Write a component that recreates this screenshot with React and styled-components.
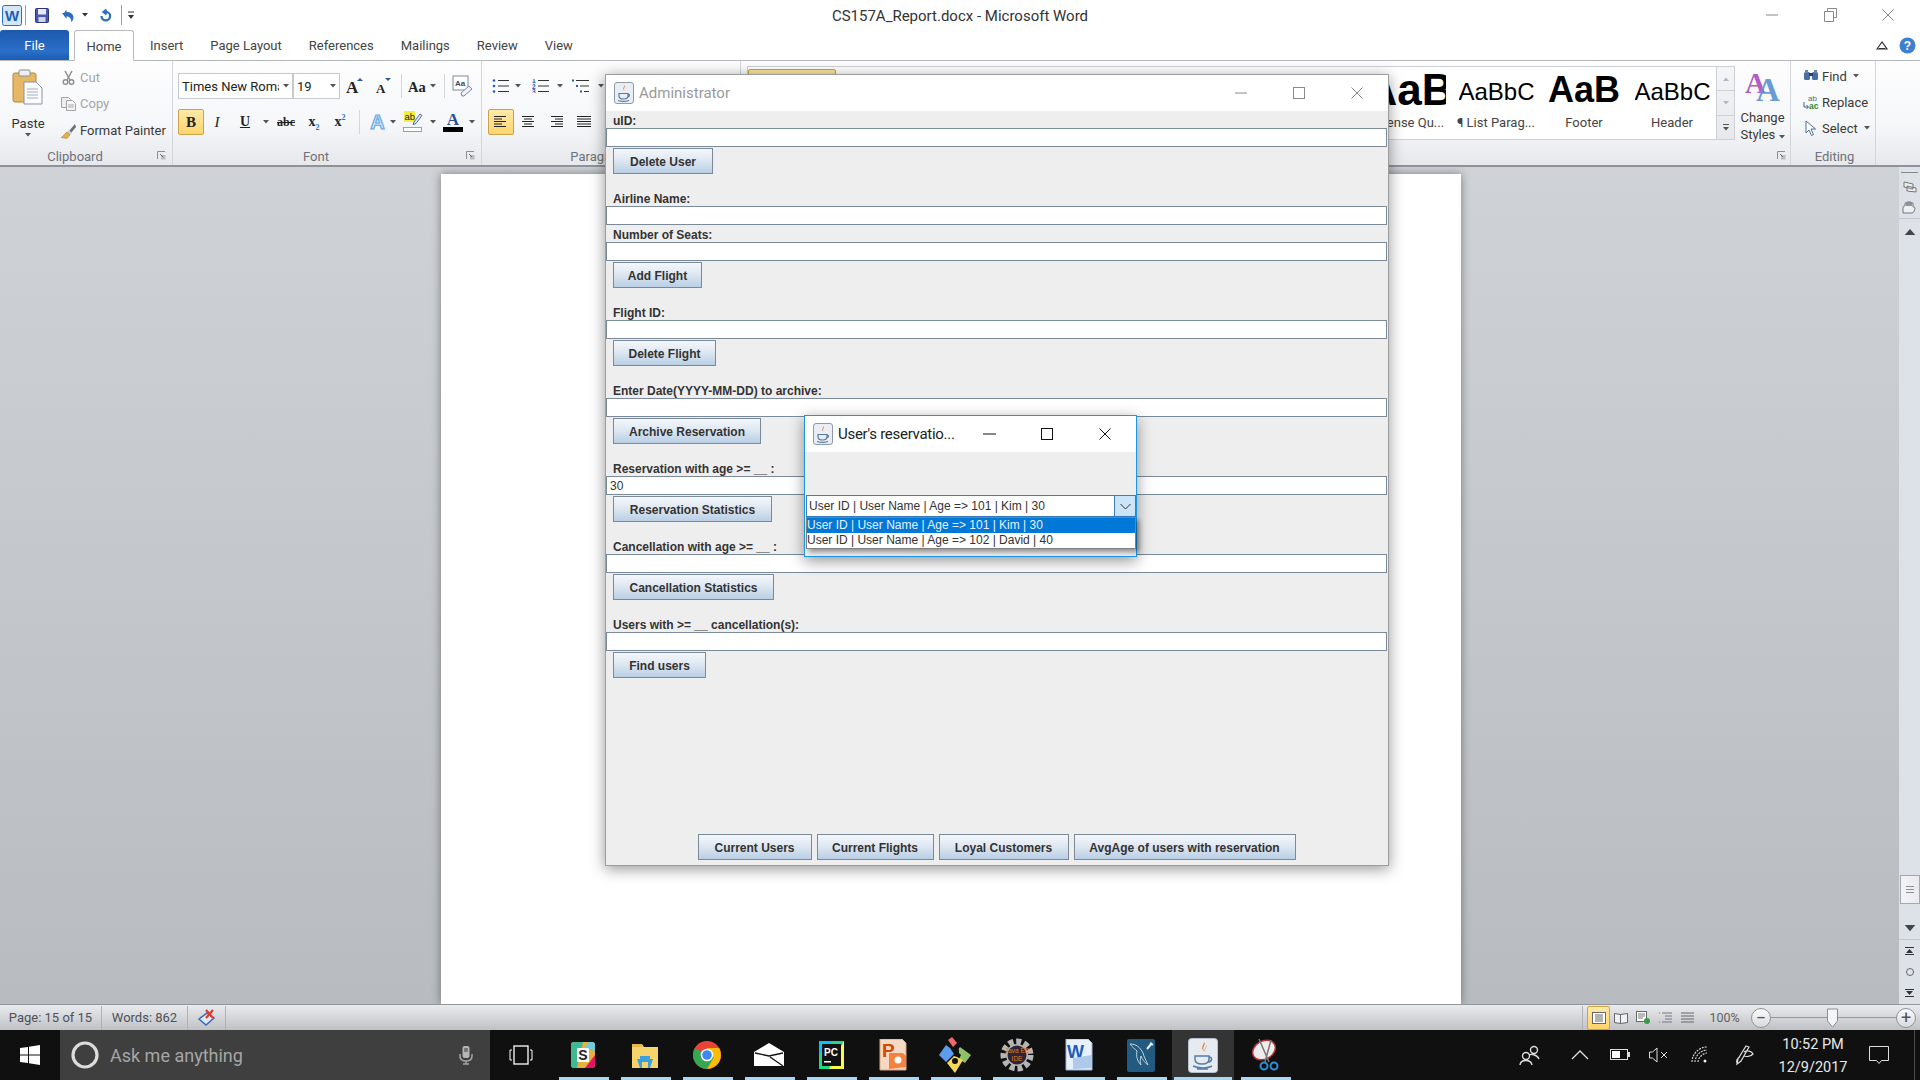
import React from "react";
import styled, { createGlobalStyle } from "styled-components";

const Global = createGlobalStyle`
  html, body { margin: 0; padding: 0; width: 1920px; height: 1080px; overflow: hidden; background: #fff; }
  * { box-sizing: border-box; }
  #root { width: 1920px; height: 1080px; }
`;

const UI = `Roboto, "Liberation Sans", sans-serif`;
const JAVA = `"Liberation Sans", Arial, sans-serif`;

const Screen = styled.div`
  position: relative; width: 1920px; height: 1080px; display: flex; flex-direction: column;
  overflow: hidden; font-family: ${UI}; font-size: 13px; color: #3c3c3c; background: #fff;
`;

/* title bar */
const TitleRow = styled.div`
  height: 30px; display: grid; grid-template-columns: 1fr auto 1fr; align-items: center; background: #fff;
`;
const Qat = styled.div`display: flex; align-items: center; padding-left: 2px;`;
const QatSlot = styled.div`
  width: ${p => p.$w}px; height: 30px; display: flex; align-items: center; justify-content: center;
`;
const QatSep = styled.div`width: 1px; height: 20px; background: #9c9c9c; margin: 0 ${p => p.$m || 0}px;`;
const DocTitle = styled.div`font-size: 15px; color: #333; white-space: nowrap; padding-top: 2px;`;
const WinCtrls = styled.div`display: flex; justify-content: flex-end; padding-right: 3px;`;
const WinCtrl = styled.div`
  width: ${p => p.$w || 58}px; height: ${p => p.$h || 30}px; display: flex; align-items: center; justify-content: center;
`;

/* tabs */
const TabRow = styled.div`
  height: 31px; display: flex; align-items: flex-end; background: #fff; border-bottom: 1px solid #b6babf;
`;
const FileTab = styled.div`
  width: 69px; height: 30px; margin-right: 5px; color: #fff; display: flex; align-items: center; justify-content: center;
  background: linear-gradient(#1d58ad, #2a6fc9 70%, #1c5cb3); border-radius: 3px 3px 0 0; font-size: 13px; padding-top: 1px;
`;
const Tab = styled.div`
  height: ${p => (p.$on ? 31 : 30)}px; padding: 1px 13.5px 0; display: flex; align-items: center; color: #444;
  margin-bottom: ${p => (p.$on ? -1 : 0)}px; margin-left: ${p => p.$gap || 0}px; white-space: nowrap;
  ${p => p.$on && `background:#fff;border:1px solid #b6babf;border-bottom:1px solid #fff;border-radius:3px 3px 0 0;padding:1px 13px 0;width:60px;justify-content:center;`}
`;
const HelpBox = styled.div`
  margin-left: auto; display: flex; align-items: center; gap: 10px; height: 30px; padding-right: 4px;
`;

/* ribbon */
const Ribbon = styled.div`
  height: 106px; display: flex; background: linear-gradient(#fdfdfe, #f6f7f9 60%, #e6e8ec); border-bottom: 2px solid #8f9298;
`;
const Group = styled.div`
  width: ${p => p.$w}px; flex: none; display: flex; flex-direction: column; border-right: 1px solid #d3d6db;
`;
const GroupBody = styled.div`height: 85px; display: flex; padding-left: ${p => p.$pl || 0}px;`;
const GroupFoot = styled.div`
  height: 19px; display: flex; align-items: center; color: #6d7178; padding-left: ${p => p.$pl || 0}px;
`;
const GroupName = styled.div`flex: 1; text-align: center; font-size: 13px; line-height: 19px; padding-top: 2px;`;
const Launcher = styled.div`width: ${p => p.$w || 22}px; height: 19px; display: flex; align-items: center; justify-content: center;`;

const PasteCol = styled.div`
  width: 56px; flex: none; display: flex; flex-direction: column; align-items: center; padding-top: 8px;
`;
const PasteLabel = styled.div`margin-top: 10px; line-height: 18px; color: #333;`;
const SmallCol = styled.div`display: flex; flex-direction: column; padding-top: ${p => p.$pt ?? 3}px;`;
const SmallRow = styled.div`
  height: ${p => p.$h || 26}px; display: flex; align-items: center; white-space: nowrap; color: ${p => (p.$off ? "#a3a5a8" : "#3a3a3a")};
`;
const SmallIcon = styled.div`width: ${p => p.$w || 24}px; flex: none; display: flex; justify-content: center;`;

const Rows = styled.div`display: flex; flex-direction: column; gap: 10px; padding-top: 12px;`;
const Row = styled.div`height: 26px; display: flex; align-items: center;`;
const Combo = styled.div`
  width: ${p => p.$w}px; height: 26px; background: #fff; border: 1px solid #c6c9ce; display: flex; align-items: center;
  padding: 0 3px; color: #222; font-size: 13px; justify-content: space-between; overflow: hidden; white-space: nowrap;
`;
const ComboText = styled.span`width: ${p => p.$w}px; overflow: hidden; display: block;`;
const Slot = styled.div`
  width: ${p => p.$w}px; height: 26px; flex: none; display: flex; align-items: center; justify-content: center; color: #222;
  ${p => p.$on && `background:linear-gradient(#fee9a8,#fdd56f);border:1px solid #c9a24c;border-radius:2px;`}
`;
const VLine = styled.div`width: ${p => p.$w}px; height: 24px; flex: none; display: flex; justify-content: center; &::after{content:"";width:1px;background:#d5d7da;}`;
const SerifGlyph = styled.span`
  font-family: "Liberation Serif", serif; font-weight: ${p => (p.$b ? 700 : 400)}; font-style: ${p => (p.$i ? "italic" : "normal")};
  font-size: ${p => p.$s || 14}px; text-decoration: ${p => (p.$u ? "underline" : p.$strike ? "line-through" : "none")}; color: #222;
`;
const Sub = styled.sub`font-size: 8px; color: #2b6fc9; line-height: 0;`;
const Sup = styled.sup`font-size: 8px; color: #2b6fc9; line-height: 0;`;

const Gallery = styled.div`
  margin: 5px 0 0 6px; width: 988px; height: 74px; display: flex; background: #fff; border: 1px solid #cdd0d4; border-right: 0;
`;
const GalleryActive = styled.div`
  width: 88px; flex: none; margin: 2px 0 0 0; background: linear-gradient(#fce59b,#f9d36a); border: 1px solid #c8a245;border-radius:2px;
`;
const GalleryGap = styled.div`flex: 1;`;
const Cell = styled.div`width: 88px; flex: none; display: flex; flex-direction: column; align-items: center;`;
const Preview = styled.div`
  height: 46px; width: 75px; overflow: hidden; display: flex; align-items: center; color: #000; white-space: nowrap; line-height: 1;
  font-family: "Liberation Sans", Arial, sans-serif; font-size: ${p => p.$s}px; font-weight: ${p => (p.$b ? 700 : 400)};
  justify-content: ${p => (p.$c ? "center" : "flex-start")}; padding-top: ${p => p.$pt || 0}px; text-indent: ${p => p.$shift || 0}px;
`;
const CellName = styled.div`font-size: 13px; color: #444; white-space: nowrap; line-height: 18px; padding-top: 1px;`;
const GalScroll = styled.div`width: 19px; flex: none; display: flex; flex-direction: column; background: linear-gradient(#f4f5f7,#e6e8eb);border:1px solid #cdd0d4;margin:-1px 0;`;
const GalBtn = styled.div`flex: 1; display: flex; align-items: center; justify-content: center; border-top: ${p => (p.$t ? "1px solid #cdd0d4" : "0")};`;
const ChangeCol = styled.div`
  width: 55px; flex: none; display: flex; flex-direction: column; align-items: center; padding-top: 8px; line-height: 17px; color: #3a3a3a;
`;
const ChangeText = styled.div`white-space: nowrap; margin-top: ${p => p.$mt || 0}px;`;

/* workspace */
const Workspace = styled.div`flex: 1; display: flex; min-height: 0;`;
const DocArea = styled.div`
  flex: 1; display: flex; justify-content: center; padding: 7px 0 0 3px; overflow: hidden; background: linear-gradient(#cfd2d6,#b8bbbf);
`;
const Page = styled.div`width: 1020px; background: #fff; box-shadow: 0 0 9px rgba(0,0,0,.4);`;
const VScroll = styled.div`width: 21px; flex: none; display: flex; flex-direction: column; background: #dde1e8; color: #555;`;
const VTop = styled.div`height: 52px; display: flex; flex-direction: column; align-items: center; justify-content: space-between; padding: 5px 0 4px; border-bottom: 1px solid #c4c8ce;`;
const VDash = styled.div`width: 17px; height: 1px; background: #888;`;
const VArrow = styled.div`height: ${p => p.$h || 24}px; flex: none; display: flex; align-items: center; justify-content: center;`;
const VTrack = styled.div`flex: 1; padding-top: 632px;`;
const VThumb = styled.div`
  height: 29px; margin: 0 0 0 1px; width: 20px; background: linear-gradient(90deg,#f3f4f7,#e9ebef); border: 1px solid #a5a8ad;
  display: flex; flex-direction: column; align-items: center; justify-content: center; gap: 2px;
`;
const Grip = styled.div`width: 8px; height: 1px; background: #8c8f94;`;
const VBrowse = styled.div`height: 65px; flex: none; display: flex; flex-direction: column; border-top: 1px solid #c4c8ce;`;
const VBrowseItem = styled.div`flex: 1; display: flex; align-items: center; justify-content: center;`;

/* status bar */
const StatusBar = styled.div`
  height: 26px; flex: none; display: flex; align-items: center; color: #4d5158; font-size: 13px;
  background: linear-gradient(#e9ebee,#bfc1c6); border-top: 1px solid #93969b;
`;
const StatusItem = styled.div`
  width: ${p => p.$w}px; height: 24px; display: flex; align-items: center; justify-content: center; border-right: 1px solid #aeb1b6; white-space: nowrap;
`;
const StatusRight = styled.div`margin-left: auto; display: flex; align-items: center; padding-right: 4px;`;
const ViewGroup = styled.div`display: flex; align-items: center; border-left: 1px solid #aeb1b6; padding-left: 4px;`;
const ViewBtn = styled.div`
  width: ${p => p.$w || 22}px; height: 24px; display: flex; align-items: center; justify-content: center;
  ${p => p.$on && `background:linear-gradient(#fee9a8,#fdd36b);border:1px solid #c9a24c;border-radius:2px;`}
`;
const Zoom = styled.div`width: 53px; text-align: center; font-size: 12.5px; color: #66615a;`;
const ZoomBtn = styled.div`
  width: 20px; height: 20px; border-radius: 50%; border: 1px solid #8f9298; background: linear-gradient(#fafbfc,#d8dadd);
  display: flex; align-items: center; justify-content: center; flex: none; font-size: 18px; line-height: 16px; color: #555;
`;
const ZoomTrack = styled.div`width: 125px; height: 24px; display: flex; align-items: center; position: relative; &::before{content:"";flex:1;height:1px;background:#94979c;}`;
const ZoomThumb = styled.div`position: absolute; left: 56px; top: 2px;`;

/* taskbar */
const Taskbar = styled.div`height: 50px; flex: none; display: flex; align-items: center; background: #101010; color: #e6e6e6;`;
const StartBtn = styled.div`width: 60px; height: 50px; display: flex; align-items: center; justify-content: center;`;
const Search = styled.div`
  width: 430px; height: 50px; background: #3f3f3f; display: flex; align-items: center; padding: 0 17px 0 10px;
`;
const SearchText = styled.div`flex: 1; margin-left: 10px; font-size: 18px; color: #a6a6a6;`;
const TaskView = styled.div`width: 62px; height: 50px; display: flex; align-items: center; justify-content: center;`;
const TaskBtn = styled.div`
  position: relative; width: 62px; height: 50px; display: flex; align-items: center; justify-content: center;
  background: ${p => (p.$active ? "#343434" : "transparent")};
  &::after { content: ""; position: absolute; bottom: 0; height: 3px; left: ${p => (p.$active ? 2 : 7)}px; right: ${p => (p.$active ? 2 : 5)}px; background: #a6d8f5; }
`;
const Tray = styled.div`margin-left: auto; display: flex; align-items: center; height: 50px; padding-right: 5px;`;
const TrayIcon = styled.div`width: ${p => p.$w}px; flex: none; display: flex; justify-content: center; align-items: center;`;
const Clock = styled.div`width: 70px; flex: none; display: flex; flex-direction: column; align-items: center; font-size: 14.5px; line-height: 23px; color: #e8e8e8; padding-top: 2px; white-space: nowrap;`;
const ShowDesktop = styled.div`width: 1px; height: 50px; margin-left: 4px; background: #4a4a4a;`;

/* java windows */
const AdminWindow = styled.div`
  position: absolute; left: 605px; top: 74px; width: 784px; height: 792px; display: flex; flex-direction: column;
  background: #eeeeee; border: 1px solid #9d9d9d; box-shadow: 0 3px 14px rgba(0,0,0,.42); font-family: ${JAVA};
`;
const FrameTitle = styled.div`
  height: ${p => p.$h}px; flex: none; background: #fff; display: flex; align-items: center; padding-left: 8px;
  font-family: ${UI}; font-size: 15px; color: ${p => (p.$dim ? "#9a9a9a" : "#222")}; white-space: nowrap;
`;
const FrameName = styled.div`margin-left: 5px; width: ${p => p.$w}px; letter-spacing: ${p => (p.$tight ? "-.28px" : "0")};`;
const FrameBtns = styled.div`margin-left: auto; display: flex; padding-right: 2px;`;
const FrameBtn = styled.div`width: ${p => p.$w}px; height: 36px; display: flex; align-items: center; justify-content: center;`;
const Form = styled.div`flex: 1; display: flex; flex-direction: column;`;
const FormBlock = styled.div`display: flex; flex-direction: column; margin-bottom: 15px;`;
const FieldLabel = styled.div`height: 17px; line-height: 20px; padding-left: 7px; font-size: 12px; font-weight: 700; color: #333; white-space: nowrap;`;
const Field = styled.div`
  height: 19px; margin: 0 1px 0 0; background: #fff; border: 1px solid #7a8a99; font-size: 12px; line-height: 18px; padding-left: 3px; color: #333;
`;
const JButton = styled.div`
  height: 26px; margin-top: ${p => (p.$top ? 1 : 0)}px; margin-left: ${p => (p.$top ? 7 : 0)}px; width: ${p => p.$w}px; flex: none; padding-top: 1px;
  border: 1px solid #7a8a99; background: linear-gradient(#f4f7fb,#dfe8f2 45%,#b9cfe5);
  display: flex; align-items: center; justify-content: center; font-size: 12px; font-weight: 700; color: #333; white-space: nowrap;
`;
const FootBar = styled.div`margin-top: auto; display: flex; justify-content: center; gap: 5px; padding: 0 0 5px 0; margin-left:-1px;`;

const PopupWindow = styled.div`
  position: absolute; left: 804px; top: 415px; width: 333px; height: 142px; background: #eeeeee; border: 1px solid #1a98e2;
  box-shadow: 0 4px 14px rgba(0,0,0,.42); font-family: ${JAVA}; display: flex; flex-direction: column;
`;
const PopupBody = styled.div`flex: 1; position: relative; padding-top: 43px;`;
const PopCombo = styled.div`
  height: 22px; margin: 0 0 0 1px; background: #fff; border: 1px solid #3b7fc0; display: flex; align-items: center; font-size: 12px; color: #333;
`;
const PopComboText = styled.div`flex: 1; padding-left: 2px; white-space: nowrap;`;
const PopArrow = styled.div`width: 21px; height: 20px; background: #cce4f7; border-left: 1px solid #3b7fc0; display: flex; align-items: center; justify-content: center;`;
const PopList = styled.div`
  position: absolute; left: 0; right: 0; top: 65px; margin: 0 0 0 1px; background: #fff; border: 1px solid #7f7f7f; box-shadow: 3px 3px 5px rgba(0,0,0,.4);
  font-size: 12px; line-height: 15px; color: #333;
`;
const PopItem = styled.div`height: 15px; white-space: nowrap; ${p => p.$sel && `background:#0078d7;color:#e8f1fb;`}`;

/* icons */
const Tri = ({ dir = "d", c = "#555", s = 3 }) => (
  <svg width={s * 2} height={s + 1} viewBox="0 0 6 4">
    <path d={dir === "d" ? "M0 0h6L3 3.5z" : "M0 4h6L3 .5z"} fill={c} />
  </svg>
);
const JavaIcon = ({ size = 20 }) => (
  <svg width={size} height={size + 2} viewBox="0 0 20 22">
    <rect x=".5" y=".5" width="19" height="21" rx="2.5" fill="#e9eef4" stroke="#8d9aa8" />
    <path d="M10.5 3c1.5 2-1.8 3 .2 5.6-2.8-2-.3-3.400-.2-5.600z" fill="#e2711d" />
    <path d="M5 11.500h9v2.500c0 2-1.500 3-4.500 3S5 16 5 14zM14 12c2 0 2 2.500-.3 2.800" fill="none" stroke="#5b7aa0" strokeWidth="1.200" />
    <path d="M4 18.500c3 1 8 1 11 0" stroke="#5b7aa0" strokeWidth="1.200" fill="none" />
  </svg>
);
const MinI = ({ c = "#888", w = 12 }) => <svg width={w} height="2"><path d={`M0 1h${w}`} stroke={c} /></svg>;
const MaxI = ({ c = "#888", w = 12, h = 12 }) => <svg width={w} height={h}><rect x=".5" y=".5" width={w - 1} height={h - 1} fill="none" stroke={c} /></svg>;
const CloseI = ({ c = "#888", s = 12 }) => <svg width={s} height={s}><path d={`M.5 .5L${s - .5} ${s - .5}M${s - .5} .5L.5 ${s - .5}`} stroke={c} /></svg>;
const RestoreI = () => (
  <svg width="13" height="14"><path d="M3.500 3.500v-3h9v9h-3M.5 3.500h9v10h-9z" fill="none" stroke="#888" /></svg>
);
const LaunchI = () => (
  <svg width="9" height="9"><path d="M.5 8V.5H8" fill="none" stroke="#8b8f95" /><path d="M4 4h4.500v4.500H4z" fill="#b9bcc1" /><path d="M3 3l3 3" stroke="#666" /></svg>
);
const WordMark = () => (
  <svg width="20" height="21" viewBox="0 0 20 21">
    <rect x=".5" y=".5" width="19" height="20" rx="2" fill="#d7e6f7" stroke="#2a6fc9" />
    <text x="10" y="16" textAnchor="middle" fontFamily="Liberation Sans" fontWeight="700" fontSize="15" fill="#1d5fb8">W</text>
  </svg>
);
const SaveI = () => (
  <svg width="14" height="15" viewBox="0 0 14 15"><rect x=".5" y=".5" width="13" height="14" rx="1" fill="#4a56b0" stroke="#2b3478" /><rect x="3" y="1" width="8" height="5.500" fill="#e7edf7" /><rect x="3.500" y="9" width="7" height="5" fill="#d2d6e6" /></svg>
);
const UndoI = ({ flip }) => (
  <svg width="15" height="15" viewBox="0 0 15 15">
    {flip
      ? <path d="M8.500 1.500l-3 2.500 3 2.500M5.500 4H9a4.300 4.300 0 1 1-5.500 4" fill="none" stroke="#2d6fbe" strokeWidth="2.200" />
      : <path d="M1 5h2l2.500-3.500v2.500c4 0 7 2 7 5.500 0 2-1 3.500-2.500 4.500.5-3-1-5.500-4.500-5.500V11z" fill="#2d6fbe" />}
  </svg>
);
const CustI = () => <svg width="8" height="9"><path d="M1 1h6" stroke="#333" /><path d="M1 4h6L4 8z" fill="#333" /></svg>;
const PasteI = () => (
  <svg width="32" height="36" viewBox="0 0 32 36">
    <rect x="1" y="4" width="23" height="29" rx="2" fill="#e6b866" stroke="#b08a3c" />
    <rect x="7" y="1" width="11" height="6" rx="1" fill="#eceff3" stroke="#8a8f98" />
    <path d="M12 13h12l6 6v16H12z" fill="#fbfcfe" stroke="#8a93a3" />
    <path d="M15 20h11M15 23h11M15 26h11M15 29h11" stroke="#a4abb8" />
  </svg>
);
const CutI = () => (
  <svg width="13" height="15" viewBox="0 0 13 15"><path d="M3 1l5 9M10 1L5 10" stroke="#8f8f8f" strokeWidth="1.500" /><circle cx="3.500" cy="12" r="2.300" fill="none" stroke="#8f8f8f" strokeWidth="1.400" /><circle cx="9.500" cy="12" r="2.300" fill="none" stroke="#8f8f8f" strokeWidth="1.400" /></svg>
);
const CopyI = () => (
  <svg width="15" height="14" viewBox="0 0 15 14"><path d="M.5 .5h7l2 2v8H.5z" fill="#eee" stroke="#a3a3a3" /><path d="M5.500 3.500h6l3 3v7h-9z" fill="#f6f6f6" stroke="#a3a3a3" /><path d="M7 8h6M7 10h6" stroke="#aaa" /></svg>
);
const PainterI = () => (
  <svg width="16" height="16" viewBox="0 0 16 16"><path d="M15 1l-6 7 2 2 5-6z" fill="#6a6f7a" /><path d="M9 7l3 3-2 2-3-3z" fill="#c9ced6" /><path d="M7 9l3 3-3 3.500-6-1c2-.5 3-3.500 6-5.500z" fill="#e3b34a" stroke="#9a7520" strokeWidth=".5" /></svg>
);
const ClearI = () => (
  <svg width="24" height="22" viewBox="0 0 24 22"><rect x="3" y="1" width="15" height="14" fill="#fff" stroke="#7f8a99" /><text x="5" y="11" fontFamily="Liberation Sans" fontSize="8" fontWeight="700" fill="#3b4a63">Aa</text><path d="M11 18l8-7 3 3-8 7h-2z" fill="#f0f2f5" stroke="#6f89ad" /></svg>
);
const GrowI = ({ up }) => (
  <svg width="18" height="18" viewBox="0 0 18 18">
    <text x={up ? 0 : 2} y="16" fontFamily="Liberation Serif" fontWeight="700" fontSize={up ? 17 : 13} fill="#222">A</text>
    <path d={up ? "M11 4h6L14 1z" : "M11 1h6l-3 3z"} fill="#2c5d9b" />
  </svg>
);
const AaI = () => (
  <svg width="18" height="16" viewBox="0 0 18 16"><text x="0" y="14" fontFamily="Liberation Serif" fontWeight="700" fontSize="14.500" fill="#222">Aa</text></svg>
);
const EffectI = () => (
  <svg width="17" height="20" viewBox="0 0 17 20"><text x="8.500" y="17" textAnchor="middle" fontFamily="Liberation Sans" fontWeight="700" fontSize="20" fill="#cfe6fa" stroke="#62a4df" strokeWidth="1.100">A</text></svg>
);
const HighlightI = () => (
  <svg width="20" height="22" viewBox="0 0 20 22">
    <rect x="1" y="0" width="11" height="11" fill="#f4ef3f" />
    <text x="1.500" y="9" fontFamily="Liberation Sans" fontSize="9.500" fill="#222">ab</text>
    <path d="M11 11l6-8 2 1.500-6 8-3 1z" fill="#dfe7f2" stroke="#4d6fa5" />
    <rect x=".5" y="16.500" width="18" height="4" fill="#fff" stroke="#9ca0a6" />
  </svg>
);
const ColorI = () => (
  <svg width="20" height="22" viewBox="0 0 20 22">
    <text x="10" y="14" textAnchor="middle" fontFamily="Liberation Serif" fontWeight="700" fontSize="17" fill="#2a4f9a">A</text>
    <rect y="16" width="20" height="5" fill="#000" />
  </svg>
);
const lines = { l: [12, 8, 12, 8, 12], c: [12, 8, 12, 8, 12], r: [12, 8, 12, 8, 12], j: [14, 14, 14, 14, 14] };
const AlignI = ({ a }) => (
  <svg width="14" height="12" viewBox="0 0 14 12">
    {lines[a].map((w, i) => {
      const l = a === "l" ? 0 : a === "r" ? 14 - w : (14 - w) / 2;
      return <path key={i} d={`M${l} ${i * 2.500 + .5}h${w}`} stroke="#222" />;
    })}
  </svg>
);
const BulletI = ({ n }) => (
  <svg width="17" height="14" viewBox="0 0 17 14">
    {[1.500, 7, 12.500].map((y, i) => (
      <g key={y}>
        {n ? <text x="0" y={y + 2.500} fontSize="6.500" fontFamily="Liberation Sans" fontWeight="700" fill="#2a5db0">{i + 1}</text> : <circle cx="2" cy={y} r="1.300" fill="#2a5db0" />}
        <path d={`M6 ${y}h11`} stroke="#333" />
      </g>
    ))}
  </svg>
);
const MultiI = () => (
  <svg width="17" height="14" viewBox="0 0 17 14"><path d="M4 1.500h13M8 7h9M12 12.500h5" stroke="#333" /><path d="M0 1.500h2M4 7h2M8 12.500h2" stroke="#2a5db0" strokeWidth="2" /></svg>
);
const BinI = () => (
  <svg width="16" height="15" viewBox="0 0 16 15"><rect x="1" y="3" width="6" height="8" rx="1.500" fill="#4a6fa5" /><rect x="9" y="3" width="6" height="8" rx="1.500" fill="#4a6fa5" /><rect x="6" y="4" width="4" height="3" fill="#2d3f5d" /><rect x="2" y="1" width="3" height="3" fill="#6d86aa" /><rect x="11" y="1" width="3" height="3" fill="#6d86aa" /></svg>
);
const ReplaceI = () => (
  <svg width="17" height="17" viewBox="0 0 17 17"><text x="5" y="7" fontFamily="Liberation Sans" fontSize="8" fill="#666">ab</text><text x="6" y="15" fontFamily="Liberation Sans" fontSize="8.500" fontWeight="700" fill="#2a8a35">ac</text><path d="M1 8v5h4M3.500 11l2 2-2 2" fill="none" stroke="#3a5f96" /></svg>
);
const SelectI = () => (
  <svg width="12" height="17" viewBox="0 0 12 17"><path d="M1 1v12l3-3 2.500 5.500 2-1L6 9h4.500z" fill="#fff" stroke="#4f6d99" /></svg>
);
const ChangeI = () => (
  <svg width="36" height="34" viewBox="0 0 36 34">
    <text x="0" y="24" fontFamily="Liberation Serif" fontWeight="700" fontSize="29" fill="#b45cc4">A</text>
    <text x="11" y="32" fontFamily="Liberation Serif" fontWeight="700" fontSize="33" fill="#5b93d3" fillOpacity=".92">A</text>
  </svg>
);
const SpellI = () => (
  <svg width="20" height="18" viewBox="0 0 20 18"><path d="M2 10l8-6 7 5-8 7z" fill="#dfe8f6" stroke="#3e68b0" strokeWidth="1.500" /><path d="M9 1l7 8M16 1L9 9" stroke="#e23b2e" strokeWidth="2.200" /></svg>
);
const ViewI = ({ k }) => {
  if (k === 0) return <svg width="14" height="12"><rect x=".5" y=".5" width="13" height="11" fill="#fff" stroke="#666" /><path d="M3 3h8M3 5h8M3 7h8M3 9h8" stroke="#666" /></svg>;
  if (k === 1) return <svg width="14" height="12"><path d="M.5 1.500l6 1v9l-6-1zM13.500 1.500l-7 1v9l7-1z" fill="#eef1f5" stroke="#666" /></svg>;
  if (k === 2) return <svg width="14" height="13"><rect x=".5" y=".5" width="10" height="10" fill="#fff" stroke="#666" /><path d="M2 3h7M2 5h7M2 7h5" stroke="#777" /><circle cx="11" cy="10" r="3" fill="#3c9a47" /></svg>;
  if (k === 3) return <svg width="13" height="12"><path d="M3 1h10M6 4h7M6 7h7M3 10h10M0 1h1M0 10h1" stroke="#777" /></svg>;
  return <svg width="13" height="11"><path d="M0 1h13M0 4h13M0 7h13M0 10h13" stroke="#666" /></svg>;
};

const WinLogo = () => (
  <svg width="20" height="20" viewBox="0 0 20 20"><path d="M0 3l8-1.100V9.500H0zM9 1.700L20 0v9.500H9zM0 10.500h8v7.600l-8-1.100zM9 10.500h11V20L9 18.300z" fill="#fff" /></svg>
);
const Cortana = () => <svg width="30" height="30"><circle cx="15" cy="15" r="12" fill="none" stroke="#dcdcdc" strokeWidth="3.200" /></svg>;
const MicI = () => (
  <svg width="14" height="20" viewBox="0 0 14 20"><rect x="3.500" y="1" width="7" height="12" rx="2" fill="#b5b5b5" /><rect x="5" y="3" width="4" height="4" fill="#777" /><path d="M1 9v2c0 3 2 5 6 5s6-2 6-5V9M7 16v3M4 19h6" fill="none" stroke="#a5a5a5" strokeWidth="1.500" /></svg>
);
const TaskViewI = () => (
  <svg width="24" height="20" viewBox="0 0 24 20"><rect x="5" y="1" width="14" height="18" fill="none" stroke="#fff" strokeWidth="1.300" /><path d="M3 5H1v10h2M21 5h2v10h-2" fill="none" stroke="#fff" /></svg>
);
const Slack = () => (
  <svg width="24" height="26" viewBox="0 0 24 26">
    <rect width="24" height="26" rx="3" fill="#e8b13a" />
    <path d="M0 3a3 3 0 0 1 3-3h9L6 26H3a3 3 0 0 1-3-3z" fill="#3eb991" />
    <path d="M17 0h4a3 3 0 0 1 3 3v6L14 6z" fill="#70cadb" />
    <path d="M24 13v10a3 3 0 0 1-3 3h-7z" fill="#e01563" />
    <rect x="6" y="6" width="12" height="14" rx="1" fill="#fff" />
    <text x="12" y="18" textAnchor="middle" fontFamily="Liberation Sans" fontWeight="700" fontSize="14" fill="#222">S</text>
  </svg>
);
const FolderI = () => (
  <svg width="28" height="28" viewBox="0 0 28 28">
    <path d="M1 3h10l2 3h14v21H1z" fill="#f7d36b" />
    <path d="M1 3h10v3H1z" fill="#e9b94a" />
    <path d="M9 15h10v3h3l-3 9H9l-3-9h3z" fill="#3aa3df" />
    <rect x="11" y="21" width="6" height="6" fill="#f7d36b" />
  </svg>
);
const ChromeI = () => (
  <svg width="28" height="28" viewBox="0 0 28 28">
    <circle cx="14" cy="14" r="14" fill="#ea4335" />
    <path d="M14 14L1.900 7A14 14 0 0 0 14 28l7-12z" fill="#34a853" />
    <path d="M14 14l7 2-7 12A14 14 0 0 0 26.100 7H14z" fill="#fbbc05" />
    <circle cx="14" cy="14" r="6.300" fill="#fff" /><circle cx="14" cy="14" r="4.800" fill="#4285f4" />
  </svg>
);
const MailI = () => (
  <svg width="30" height="26" viewBox="0 0 30 26">
    <path d="M15 1l15 9v14H0V10z" fill="#fff" />
    <path d="M1 11l14 3 14-3M29 24L16 15" fill="none" stroke="#111" strokeWidth="1.300" />
  </svg>
);
const PcI = () => (
  <svg width="25" height="28" viewBox="0 0 25 28">
    <rect width="25" height="28" fill="#21d789" /><path d="M25 0v28H10z" fill="#fcf84a" /><path d="M0 0h14L0 14z" fill="#07c3f2" />
    <rect x="3" y="3" width="19" height="22" fill="#111" />
    <text x="5" y="15" fontFamily="Liberation Sans" fontWeight="700" fontSize="10" fill="#fff">PC</text>
    <rect x="5" y="20" width="7" height="1.500" fill="#fff" />
  </svg>
);
const PptI = () => (
  <svg width="28" height="32" viewBox="0 0 28 32">
    <path d="M1 0h22l4 4v27H1z" fill="#f6d9c4" stroke="#e0a27c" />
    <text x="3" y="18" fontFamily="Liberation Sans" fontWeight="700" fontSize="19" fill="#d04a02">P</text>
    <path d="M10 14h14l3 3v11l-17 2z" fill="#f3823e" />
    <circle cx="19" cy="21" r="3.500" fill="#fff" />
  </svg>
);
const GitI = () => (
  <svg width="32" height="36" viewBox="0 0 32 36">
    <path d="M9 3l4-3 5 6-4 4z" fill="#f06a6a" /><path d="M11 11l-4-3L0 18l7 7 8-8z" fill="#5d9cec" />
    <path d="M21 10l11 8-6 8-6-4 2-4-4-4z" fill="#8ec165" /><path d="M8 26l7-7 3 1 6 3-8 13z" fill="#f6d75a" />
    <circle cx="17" cy="14" r="3" fill="#111" /><circle cx="16" cy="24" r="3" fill="#111" />
  </svg>
);
const EclipseI = () => (
  <svg width="34" height="34" viewBox="0 0 34 34">
    <circle cx="17" cy="17" r="13.500" fill="none" stroke="#b5b5b5" strokeWidth="6" strokeDasharray="5 2.800" />
    <circle cx="17" cy="17" r="11" fill="#b5b5b5" />
    <circle cx="17" cy="17" r="9.500" fill="#2c2638" />
    <text x="17" y="15" textAnchor="middle" fontFamily="Liberation Sans" fontSize="6.500" fill="#e07a12">Java EE</text>
    <text x="17" y="23" textAnchor="middle" fontFamily="Liberation Sans" fontSize="6.500" fill="#e07a12">IDE</text>
  </svg>
);
const WordBig = () => (
  <svg width="28" height="32" viewBox="0 0 28 32">
    <path d="M1 0h22l4 4v27H1z" fill="#e8f0fb" stroke="#9db8dc" />
    <text x="2" y="19" fontFamily="Liberation Sans" fontWeight="700" fontSize="18" fill="#1d5cb8">W</text>
    <path d="M8 19l19-3v13l-19 1z" fill="#aec9ea" />
  </svg>
);
const MySqlI = () => (
  <svg width="28" height="33" viewBox="0 0 28 33">
    <rect width="28" height="33" rx="2" fill="#235a7f" />
    <path d="M3 5c6 0 10 3 13 9 1 4 3 7 5 12-4-3-6-6-7-9-1 4-1 6 0 9-4-4-5-9-4-14C8 10 5 8 3 5z" fill="none" stroke="#bcd3e0" strokeWidth="1" />
    <path d="M20 10l5-6M23 4l3 2" stroke="#e6eef3" strokeWidth="2" />
  </svg>
);
const JavaBig = () => (
  <svg width="30" height="35" viewBox="0 0 30 35">
    <rect x=".5" y=".5" width="29" height="34" rx="3" fill="#e6ebf1" stroke="#b6bfcb" />
    <path d="M16 4c2.500 3-3 5 .3 9-4.500-3-.5-5.500-.3-9zM19 7c0 3-3 3-1.500 7-2.500-2.500 1-5 1.500-7z" fill="#e2711d" />
    <path d="M7 18h14v3c0 3.500-2.500 5-7 5s-7-1.500-7-5zM21 19c4 0 3 5-1 5" fill="none" stroke="#5a7da6" strokeWidth="1.500" />
    <path d="M5 28c5 2.500 15 2.500 19 0M9 31h11" stroke="#5a7da6" strokeWidth="1.500" fill="none" />
  </svg>
);
const SnipI = () => (
  <svg width="28" height="34" viewBox="0 0 28 34">
    <ellipse cx="13" cy="12" rx="12" ry="9" fill="#f0ecec" stroke="#b4343a" strokeWidth="1.500" transform="rotate(-30 13 12)" />
    <path d="M8 1l10 23M20 2L14 24" stroke="#777" strokeWidth="1.500" />
    <circle cx="13" cy="28" r="3.500" fill="none" stroke="#2d8fd5" strokeWidth="2" /><circle cx="23" cy="28" r="3.500" fill="none" stroke="#2d8fd5" strokeWidth="2" />
  </svg>
);
const PeopleI = () => (
  <svg width="22" height="22" viewBox="0 0 22 22" fill="none" stroke="#ddd" strokeWidth="1.400">
    <circle cx="15" cy="6" r="3.500" /><path d="M10 11c1.500-1 8-1 10 4" /><circle cx="7" cy="12" r="3.500" /><path d="M1 21c.5-6 11-6 12 0" />
  </svg>
);
const Chevron = () => <svg width="18" height="10"><path d="M1 9l8-8 8 8" fill="none" stroke="#ddd" strokeWidth="1.300" /></svg>;
const BatteryI = () => <svg width="20" height="12"><rect x=".5" y=".5" width="17" height="10" fill="none" stroke="#ddd" /><rect x="2" y="2" width="8" height="7" fill="#fff" /><rect x="18" y="3" width="2" height="5" fill="#ddd" /></svg>;
const VolumeI = () => <svg width="20" height="16"><path d="M.5 5h3L8 1v14L3.500 11h-3z" fill="none" stroke="#ddd" /><path d="M12 5l6 6M18 5l-6 6" stroke="#ddd" /></svg>;
const WifiI = () => (
  <svg width="18" height="18" viewBox="0 0 18 18" fill="none" stroke="#ccc" strokeWidth="1.200"><path d="M1 16C1 8 8 1 16 1M4 16c0-6 6-12 12-12M7 16c0-4 5-9 9-9" strokeDasharray="2 1" /><circle cx="14" cy="15" r="1.500" fill="#eee" stroke="none" /></svg>
);
const PenI = () => (
  <svg width="20" height="22" viewBox="0 0 20 22" fill="none" stroke="#ddd" strokeWidth="1.200"><path d="M11 2l3 1-8 14-4 3 1-5zM9 8c3-2 8-1 9 2-2 2-6 3-9 2M5 13c-3 1-4 4-3 6" /></svg>
);
const NotifyI = () => <svg width="20" height="19"><path d="M.5 .5h19v14h-7l-2.500 3-2.500-3h-7z" fill="none" stroke="#ddd" /></svg>;

const MenuCaret = () => <Tri />;

const TASKS = [
  [Slack], [FolderI], [ChromeI], [MailI], [PcI], [PptI], [GitI], [EclipseI], [WordBig], [MySqlI], [JavaBig, true], [SnipI],
];

const FormField = ({ label, value, btn, w }) => (
  <FormBlock>
    <FieldLabel>{label}</FieldLabel>
    <Field>{value}</Field>
    {btn && <JButton $top $w={w}>{btn}</JButton>}
  </FormBlock>
);

export default function App() {
  return (
    <Screen>
      <Global />
      <TitleRow>
        <Qat>
          <WordMark />
          <QatSep $m={3} />
          <QatSlot $w={26}><SaveI /></QatSlot>
          <QatSlot $w={26}><UndoI /></QatSlot>
          <QatSlot $w={8}><Tri c="#333" /></QatSlot>
          <QatSlot $w={32}><UndoI flip /></QatSlot>
          <QatSep $m={0} />
          <QatSlot $w={18}><CustI /></QatSlot>
        </Qat>
        <DocTitle>CS157A_Report.docx - Microsoft Word</DocTitle>
        <WinCtrls>
          <WinCtrl><MinI /></WinCtrl>
          <WinCtrl><RestoreI /></WinCtrl>
          <WinCtrl><CloseI /></WinCtrl>
        </WinCtrls>
      </TitleRow>

      <TabRow>
        <FileTab>File</FileTab>
        <Tab $on>Home</Tab>
        <Tab $gap={2.5}>Insert</Tab>
        <Tab>Page Layout</Tab>
        <Tab>References</Tab>
        <Tab>Mailings</Tab>
        <Tab>Review</Tab>
        <Tab>View</Tab>
        <HelpBox>
          <svg width="14" height="10"><path d="M2 9l5-7 5 7z M4 8.500h6" fill="none" stroke="#333" strokeWidth="1.200" /></svg>
          <svg width="17" height="17"><circle cx="8.500" cy="8.500" r="8" fill="#3f7fd0" /><text x="8.500" y="13" textAnchor="middle" fontFamily="Liberation Sans" fontWeight="700" fontSize="12" fill="#fff">?</text></svg>
        </HelpBox>
      </TabRow>

      <Ribbon>
        <Group $w={173}>
          <GroupBody>
            <PasteCol>
              <PasteI />
              <PasteLabel>Paste</PasteLabel>
              <Tri />
            </PasteCol>
            <SmallCol>
              <SmallRow $off><SmallIcon><CutI /></SmallIcon>Cut</SmallRow>
              <SmallRow $off $h={27}><SmallIcon><CopyI /></SmallIcon>Copy</SmallRow>
              <SmallRow $h={27}><SmallIcon><PainterI /></SmallIcon>Format Painter</SmallRow>
            </SmallCol>
          </GroupBody>
          <GroupFoot><GroupName>Clipboard</GroupName><Launcher><LaunchI /></Launcher></GroupFoot>
        </Group>

        <Group $w={309}>
          <GroupBody $pl={5}>
            <Rows>
              <Row>
                <Combo $w={115}><ComboText $w={97}>Times New Roman</ComboText><Tri /></Combo>
                <Combo $w={47}><ComboText $w={24}>19</ComboText><Tri /></Combo>
                <Slot $w={30}><GrowI up /></Slot>
                <Slot $w={26}><GrowI /></Slot>
                <VLine $w={10} />
                <Slot $w={22}><AaI /></Slot>
                <Slot $w={10}><MenuCaret /></Slot>
                <VLine $w={12} />
                <Slot $w={24}><ClearI /></Slot>
              </Row>
              <Row>
                <Slot $w={26} $on><SerifGlyph $b $s={15}>B</SerifGlyph></Slot>
                <Slot $w={26}><SerifGlyph $i $s={15}>I</SerifGlyph></Slot>
                <Slot $w={30}><SerifGlyph $b $u $s={14}>U</SerifGlyph></Slot>
                <Slot $w={12}><MenuCaret /></Slot>
                <Slot $w={28}><SerifGlyph $b $strike $s={12}>abc</SerifGlyph></Slot>
                <Slot $w={28}><SerifGlyph $b $s={14}>x<Sub>2</Sub></SerifGlyph></Slot>
                <Slot $w={24}><SerifGlyph $b $s={14}>x<Sup>2</Sup></SerifGlyph></Slot>
                <VLine $w={14} />
                <Slot $w={22}><EffectI /></Slot>
                <Slot $w={10}><MenuCaret /></Slot>
                <Slot $w={30}><HighlightI /></Slot>
                <Slot $w={10}><MenuCaret /></Slot>
                <Slot $w={30}><ColorI /></Slot>
                <Slot $w={8}><MenuCaret /></Slot>
              </Row>
            </Rows>
          </GroupBody>
          <GroupFoot><GroupName>Font</GroupName><Launcher><LaunchI /></Launcher></GroupFoot>
        </Group>

        <Group $w={259}>
          <GroupBody $pl={6}>
            <Rows>
              <Row>
                <Slot $w={24}><BulletI /></Slot>
                <Slot $w={12}><MenuCaret /></Slot>
                <Slot $w={32}><BulletI n /></Slot>
                <Slot $w={8}><MenuCaret /></Slot>
                <Slot $w={32}><MultiI /></Slot>
                <Slot $w={10}><MenuCaret /></Slot>
              </Row>
              <Row>
                <Slot $w={26} $on><AlignI a="l" /></Slot>
                <Slot $w={28}><AlignI a="c" /></Slot>
                <Slot $w={28}><AlignI a="r" /></Slot>
                <Slot $w={28}><AlignI a="j" /></Slot>
              </Row>
            </Rows>
          </GroupBody>
          <GroupFoot><GroupName>Paragraph</GroupName><Launcher><LaunchI /></Launcher></GroupFoot>
        </Group>

        <Group $w={1050}>
          <GroupBody>
            <Gallery>
              <GalleryActive />
              <GalleryGap />
              <Cell>
                <Preview $s={44} $b $shift={-5}>AaB</Preview>
                <CellName>Intense Qu...</CellName>
              </Cell>
              <Cell>
                <Preview $s={24} $pt={3}>AaBbCc</Preview>
                <CellName>¶ List Parag...</CellName>
              </Cell>
              <Cell>
                <Preview $s={36} $b $c>AaB</Preview>
                <CellName>Footer</CellName>
              </Cell>
              <Cell>
                <Preview $s={24} $pt={3}>AaBbCc</Preview>
                <CellName>Header</CellName>
              </Cell>
              <GalScroll>
                <GalBtn><Tri dir="u" c="#b5b8bc" /></GalBtn>
                <GalBtn $t><Tri c="#b5b8bc" /></GalBtn>
                <GalBtn $t><svg width="8" height="7"><path d="M1 .5h6" stroke="#555" /><path d="M1 3h6L4 6.500z" fill="#555" /></svg></GalBtn>
              </GalScroll>
            </Gallery>
            <ChangeCol>
              <ChangeI />
              <ChangeText $mt={6}>Change</ChangeText>
              <ChangeText>Styles <Tri /></ChangeText>
            </ChangeCol>
          </GroupBody>
          <GroupFoot><GroupName>Styles</GroupName><Launcher $w={18}><LaunchI /></Launcher></GroupFoot>
        </Group>

        <Group $w={85}>
          <GroupBody $pl={9}>
            <SmallCol $pt={2}>
              <SmallRow><SmallIcon $w={22}><BinI /></SmallIcon>Find&nbsp;&nbsp;<Tri /></SmallRow>
              <SmallRow><SmallIcon $w={22}><ReplaceI /></SmallIcon>Replace</SmallRow>
              <SmallRow><SmallIcon $w={22}><SelectI /></SmallIcon>Select&nbsp;&nbsp;<Tri /></SmallRow>
            </SmallCol>
          </GroupBody>
          <GroupFoot $pl={3}><GroupName>Editing</GroupName></GroupFoot>
        </Group>
      </Ribbon>

      <Workspace>
        <DocArea><Page /></DocArea>
        <VScroll>
          <VTop>
            <VDash />
            <svg width="14" height="12"><path d="M1 1l9 2v5l-9-2zM4 5l9 2v4l-9-1z" fill="#eee" stroke="#777" /></svg>
            <svg width="15" height="13" viewBox="0 0 15 13"><path d="M1 12V7c0-2 1-2 2-2V2l2 0 0 3V1h2v4-4h2v4V2h2v4c1 0 2 0 2 1s-1 5-3 5z" fill="#eceff3" stroke="#777" /></svg>
          </VTop>
          <VArrow><Tri dir="u" c="#444" s={6} /></VArrow>
          <VTrack>
            <VThumb><Grip /><Grip /><Grip /></VThumb>
          </VTrack>
          <VArrow $h={22}><Tri c="#444" s={6} /></VArrow>
          <VBrowse>
            <VBrowseItem><svg width="9" height="8"><path d="M0 .5h9" stroke="#333" /><path d="M4.500 2L8 6H1z" fill="#333" /><path d="M0 7.500h9" stroke="#333" /></svg></VBrowseItem>
            <VBrowseItem><svg width="8" height="8"><circle cx="4" cy="4" r="3.500" fill="#dfe2e8" stroke="#666" /></svg></VBrowseItem>
            <VBrowseItem><svg width="9" height="8"><path d="M0 .5h9" stroke="#333" /><path d="M4.500 6L8 2H1z" fill="#333" /><path d="M0 7.500h9" stroke="#333" /></svg></VBrowseItem>
          </VBrowse>
        </VScroll>
      </Workspace>

      <StatusBar>
        <StatusItem $w={102}>Page: 15 of 15</StatusItem>
        <StatusItem $w={86}>Words: 862</StatusItem>
        <StatusItem $w={38}><SpellI /></StatusItem>
        <StatusRight>
          <ViewGroup>
            <ViewBtn $on $w={23}><ViewI k={0} /></ViewBtn>
            <ViewBtn><ViewI k={1} /></ViewBtn>
            <ViewBtn><ViewI k={2} /></ViewBtn>
            <ViewBtn><ViewI k={3} /></ViewBtn>
            <ViewBtn><ViewI k={4} /></ViewBtn>
          </ViewGroup>
          <Zoom>100%</Zoom>
          <ZoomBtn>−</ZoomBtn>
          <ZoomTrack>
            <ZoomThumb><svg width="11" height="20"><path d="M.5 1h10v12l-5 6-5-6z" fill="#f4f5f7" stroke="#8a8d92" /></svg></ZoomThumb>
          </ZoomTrack>
          <ZoomBtn>+</ZoomBtn>
        </StatusRight>
      </StatusBar>

      <Taskbar>
        <StartBtn><WinLogo /></StartBtn>
        <Search>
          <Cortana />
          <SearchText>Ask me anything</SearchText>
          <MicI />
        </Search>
        <TaskView><TaskViewI /></TaskView>
        {TASKS.map(([Icon, active], i) => (
          <TaskBtn key={i} $active={active}><Icon /></TaskBtn>
        ))}
        <Tray>
          <TrayIcon $w={40}><PeopleI /></TrayIcon>
          <TrayIcon $w={60}><Chevron /></TrayIcon>
          <TrayIcon $w={20}><BatteryI /></TrayIcon>
          <TrayIcon $w={58}><VolumeI /></TrayIcon>
          <TrayIcon $w={24}><WifiI /></TrayIcon>
          <TrayIcon $w={66}><PenI /></TrayIcon>
          <Clock><span>10:52 PM</span><span>12/9/2017</span></Clock>
          <TrayIcon $w={62}><NotifyI /></TrayIcon>
          <ShowDesktop />
        </Tray>
      </Taskbar>

      <AdminWindow>
        <FrameTitle $h={36} $dim>
          <JavaIcon />
          <FrameName $w={100}>Administrator</FrameName>
          <FrameBtns>
            <FrameBtn $w={58}><MinI /></FrameBtn>
            <FrameBtn $w={58}><MaxI /></FrameBtn>
            <FrameBtn $w={58}><CloseI /></FrameBtn>
          </FrameBtns>
        </FrameTitle>
        <Form>
          <FormField label="uID:" btn="Delete User" w={100} />
          <FormBlock>
            <FieldLabel>Airline Name:</FieldLabel>
            <Field />
            <FieldLabel>Number of Seats:</FieldLabel>
            <Field />
            <JButton $top $w={89}>Add Flight</JButton>
          </FormBlock>
          <FormField label="Flight ID:" btn="Delete Flight" w={103} />
          <FormField label="Enter Date(YYYY-MM-DD) to archive:" btn="Archive Reservation" w={148} />
          <FormField label="Reservation with age >= __ :" value="30" btn="Reservation Statistics" w={159} />
          <FormField label="Cancellation with age >= __ :" btn="Cancellation Statistics" w={161} />
          <FormField label="Users with >= __ cancellation(s):" btn="Find users" w={93} />
          <FootBar>
            <JButton $w={114}>Current Users</JButton>
            <JButton $w={117}>Current Flights</JButton>
            <JButton $w={130}>Loyal Customers</JButton>
            <JButton $w={222}>AvgAge of users with reservation</JButton>
          </FootBar>
        </Form>
      </AdminWindow>

      <PopupWindow>
        <FrameTitle $h={36}>
          <JavaIcon />
          <FrameName $w={118} $tight>User's reservatio...</FrameName>
          <FrameBtns>
            <FrameBtn $w={58}><MinI c="#111" w={13} /></FrameBtn>
            <FrameBtn $w={58}><MaxI c="#111" /></FrameBtn>
            <FrameBtn $w={58}><CloseI c="#111" /></FrameBtn>
          </FrameBtns>
        </FrameTitle>
        <PopupBody>
          <PopCombo>
            <PopComboText>User ID | User Name | Age =&gt; 101 | Kim | 30</PopComboText>
            <PopArrow><svg width="11" height="7"><path d="M.5 1l5 5 5-5" fill="none" stroke="#333" /></svg></PopArrow>
          </PopCombo>
          <PopList>
            <PopItem $sel>User ID | User Name | Age =&gt; 101 | Kim | 30</PopItem>
            <PopItem>User ID | User Name | Age =&gt; 102 | David | 40</PopItem>
          </PopList>
        </PopupBody>
      </PopupWindow>
    </Screen>
  );
}
